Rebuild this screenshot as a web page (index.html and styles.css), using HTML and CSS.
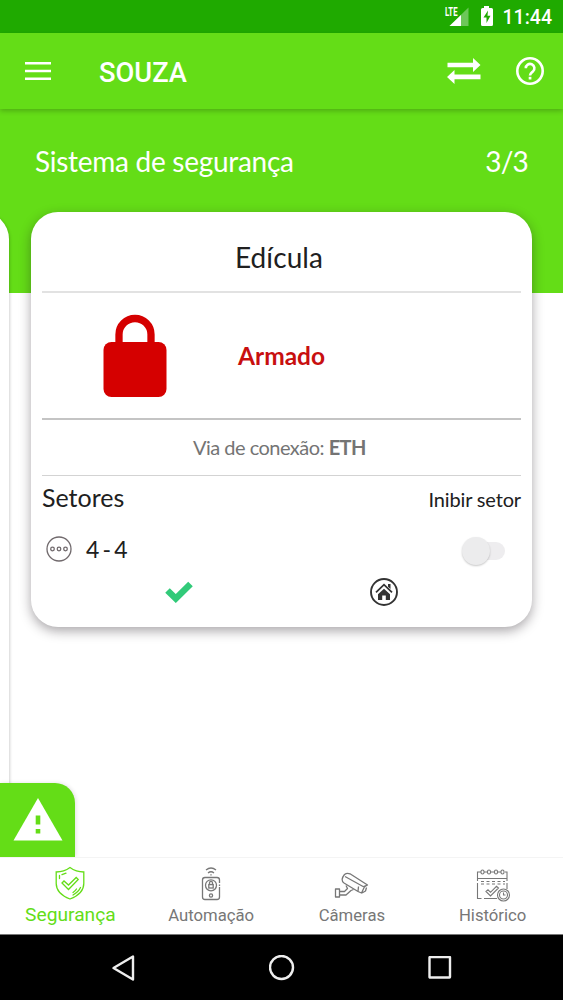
FILE: index.html
```html
<!DOCTYPE html>
<html lang="pt-BR">
<head>
<meta charset="utf-8">
<title>Sistema de segurança</title>
<link rel="stylesheet" href="styles.css">
</head>
<body>
<div class="phone">
  <div class="status">
    <svg class="signal" width="26" height="24" viewBox="0 0 26 24">
      <path d="M24.500 3.500V22H5.500z" fill="#fff" opacity=".35"/>
      <path d="M17 11V22H5.500z" fill="#fff"/>
      <path d="M0 0h14v10l-3 2.500H0z" fill="#1faa00"/>
      <text class="lte" x="1" y="11.500" textLength="12.500" lengthAdjust="spacingAndGlyphs">LTE</text>
    </svg>
    <svg class="battery" width="14" height="20" viewBox="0 0 14 20">
      <path d="M4 0h5v2h2.500Q13 2 13 3.500v15q0 1.500-1.500 1.500h-9Q1 20 1 18.500v-15Q1 2 2.500 2H4z" fill="#fff"/>
      <path d="M8 4.500L3.500 11.500H6.500V17L10.500 9.800H7.500z" fill="#1faa00"/>
    </svg>
    <span class="clock">11:44</span>
  </div>
  <header class="toolbar">
    <svg class="menu" width="26" height="18" viewBox="0 0 26 18"><path d="M0 1.300h26M0 9h26M0 16.700h26" stroke="#fff" stroke-width="2.600"/></svg>
    <h1 class="brand">SOUZA</h1>
    <svg class="swap" width="34" height="26" viewBox="0 0 34 26"><path d="M.5 4.700H26V0l7.500 7-7.500 7V9.300H.5zM33.500 21.300H7.500V26L0 19l7.500-7v4.600h26z" fill="#fff"/></svg>
    <svg class="help" width="28" height="28" viewBox="0 0 28 28"><circle cx="14" cy="14" r="12.700" fill="none" stroke="#fff" stroke-width="2.600"/><path d="M9.800 11.300a4.300 4.300 0 1 1 7.200 3.100c-1.500 1.400-3 2.100-3 4" fill="none" stroke="#fff" stroke-width="2.600"/><path d="M12.700 19.800h2.700v2.700h-2.700z" fill="#fff"/></svg>
  </header>
  <main class="content">
    <div class="heading"><span class="heading-title">Sistema de segurança</span><span class="heading-page">3/3</span></div>
    <div class="pager">
      <div class="previous"></div>
      <section class="card">
        <h2 class="name">Edícula</h2>
        <div class="state">
          <svg class="lock" width="64" height="84" viewBox="0 0 64 84"><path d="M16 32V20.500a16 16 0 0 1 32 0V32" fill="none" stroke="#d50000" stroke-width="7.300"/><rect x=".5" y="28" width="63" height="55" rx="8" fill="#d50000"/></svg>
          <strong class="armed">Armado</strong>
        </div>
        <p class="link">Via de conexão: <b>ETH</b></p>
        <div class="sectors"><span class="sectors-title">Setores</span><span class="inhibit">Inibir setor</span></div>
        <div class="sector">
          <svg width="26" height="26" viewBox="0 0 26 26" fill="none" stroke="#716a6d" stroke-width="1.300"><circle cx="13" cy="13" r="12"/><circle cx="6.500" cy="13" r="1.800"/><circle cx="13" cy="13" r="1.800"/><circle cx="19.500" cy="13" r="1.800"/></svg>
          <span class="sector-name">4 - 4</span>
          <span class="switch"><span class="knob"></span></span>
        </div>
        <div class="flags">
          <svg width="28" height="22" viewBox="0 0 28 22"><path d="M2.500 9.500L10.800 17.500L25.500 3" fill="none" stroke="#31ca79" stroke-width="6.500" stroke-linejoin="miter"/></svg>
          <svg width="28" height="28" viewBox="0 0 28 28"><circle cx="14" cy="14" r="13" fill="none" stroke="#333" stroke-width="1.900"/><path d="M6 14.300l8-7.600 8 7.600" fill="none" stroke="#333" stroke-width="1.800"/><path d="M18 6h2.500v5L18 8.800zM14 10.800l6 5.500V22h-4.200v-4.500h-3.600V22H8v-5.700z" fill="#333"/></svg>
        </div>
      </section>
    </div>
    <div class="alert"><svg width="50" height="43" viewBox="0 0 50 43"><path d="M25 0l24.500 42.500H.5z" fill="#fff"/><path d="M22.700 17.500h4.600v9h-4.600zM22.700 31h4.600v4.500h-4.600z" fill="#64dd17"/></svg></div>
  </main>
  <nav class="tabs">
    <div class="tab active">
      <svg width="32" height="36" viewBox="0 0 32 36" fill="none" stroke="currentColor" stroke-width="1.300" stroke-linecap="round"><path d="M16 1.500C12 4.500 7 6 2.200 6V17.500c0 8 6 12.500 13.800 15.500C23.800 30 29.800 25.500 29.800 17.500V6C25 6 20 4.500 16 1.500z"/><path d="M5.500 12.500V9.500M8 8.700l4-1.500M26.500 21.500c-1.500 3.500-4 5.500-7.500 7.500M22.500 23c-1 1.500-2 2.500-3.500 3.500"/><path d="M8 17l2-2 4.500 4 7.700-7.500 2 2-9.700 10z"/></svg>
      <span>Segurança</span>
    </div>
    <div class="tab">
      <svg width="32" height="36" viewBox="0 0 32 36" fill="none" stroke="currentColor" stroke-width="1.300"><path d="M11 4q5-4 10 0M13 7q3-2.500 6 0M16 8.200v1.200M24.500 17v-3q0-2.500-2.500-2.500H10q-2.500 0-2.500 2.500v17q0 2.500 2.500 2.500h12q2.500 0 2.500-2.500V21M24.500 20v-1.500"/><circle cx="16" cy="19.300" r="5.500"/><rect x="13.800" y="18.600" width="4.400" height="3.400"/><path d="M14.500 18v-1.200a1.500 1.500 0 0 1 3 0V18"/><circle cx="16" cy="29.500" r="1.600"/></svg>
      <span>Automação</span>
    </div>
    <div class="tab">
      <svg class="camera" width="36" height="36" viewBox="0 0 36 36" fill="none" stroke="currentColor" stroke-width="1.300" stroke-linejoin="round"><path d="M10.500 6.500Q13 4.500 16 5.800L33.500 17l-3 1.700-3 6.300-3.500-1.500-14-8.500Q6 12 10.500 6.500zM11 8.500l18.500 10.200M29.500 18.700l4-1.700M28 25l3.500-2 1-3.500M24 23.500l.5-5"/><path d="M12 17.500l1.500 3-3 3H5.500V27h6.500l5-4.500 2.500-1M1.500 21h4v8h-4z"/></svg>
      <span>Câmeras</span>
    </div>
    <div class="tab">
      <svg class="calendar" width="36" height="36" viewBox="0 0 36 36" fill="none" stroke="currentColor" stroke-width="1.100"><path d="M6 4H2.500v9M32 13V4h-2M9 4h3M15 4h4M22 4h4M2.500 15v15.500h4M9 30.500h13M32 15v6M2.500 10.500h29.500"/><g stroke-dasharray="3 2.500"><path d="M6 13.500h24M6 16h24"/></g><rect x="6" y="2" width="3" height="4" rx="1.500"/><rect x="12.500" y="2" width="3" height="4" rx="1.500"/><rect x="19.500" y="2" width="3" height="4" rx="1.500"/><rect x="26" y="2" width="3" height="4" rx="1.500"/><path d="M11 23.500l2-1.700 2.500 2.500 6-6 2 1.700-8 8z"/><circle cx="28.500" cy="27" r="6"/><circle cx="28.500" cy="27" r="4"/><path d="M28.500 24.500V27h2"/></svg>
      <span>Histórico</span>
    </div>
  </nav>
  <footer class="system">
    <svg width="24" height="28" viewBox="0 0 24 28"><path d="M22 2.500v23L2.500 14z"/></svg>
    <svg width="26" height="26" viewBox="0 0 26 26"><circle cx="12.500" cy="12.500" r="11.500"/></svg>
    <svg width="24" height="24" viewBox="0 0 24 24"><rect x="1.500" y="1" width="20.500" height="20.500" rx=".5"/></svg>
  </footer>
</div>
</body>
</html>
```
FILE: styles.css
```css
* { box-sizing: border-box; }
body { margin: 0; font-family: Lato, sans-serif; color: #202020; background: #fff; }
svg { display: block; flex: none; }
.phone { width: 563px; height: 1000px; display: flex; flex-direction: column; overflow: hidden; }

.status { flex: none; height: 33px; background: #1faa00; display: flex; align-items: center; padding-right: 11px; justify-content: flex-end; font-family: Roboto, sans-serif; color: #fff; }
.signal { margin: 0 10px 2px 0; }
.lte { font: 700 13px Roboto, sans-serif; fill: #fff; }
.battery { margin: 0 9px 1px 0; }
.clock { font-size: 19.5px; font-weight: 500; line-height: 33px; padding-top: 1px; }

.toolbar { flex: none; height: 76px; background: #64dd17; display: flex; align-items: center; padding: 0 19px 0 25px; position: relative; z-index: 2; box-shadow: 0 2px 5px rgba(0, 0, 0, .22); }
.brand { margin: 3px auto 0 48px; color: #fff; font: 500 27.3px/36px Roboto, sans-serif; }
.swap { margin-right: 35px; }

.content { flex: none; height: 748px; position: relative; background: linear-gradient(#64dd17 184px, #fff 184px); }
.heading { height: 103px; display: flex; justify-content: space-between; padding: 34px 35px 0 35px; color: #fff; font-size: 28px; line-height: 36px; letter-spacing: -.28px; }
.heading-page { letter-spacing: -.8px; }
.pager { display: flex; align-items: flex-start; }
.previous { flex: none; width: 60px; height: 640px; margin: 0 22px 0 -51px; background: #fff; border-radius: 27px; box-shadow: 1px 1px 3px rgba(0, 0, 0, .18); }
.card { flex: none; width: 501px; height: 415px; padding: 0 11px; background: #fff; border-radius: 27px; box-shadow: 0 4px 12px rgba(30, 20, 30, .38); }
.name { margin: 0; height: 81px; border-bottom: 2px solid #e2e2e2; padding: 10px 5px 0 0; font-size: 28px; font-weight: 400; line-height: 71px; text-align: center; letter-spacing: .1px; }
.state { height: 127px; border-bottom: 2px solid #c4c4c4; display: flex; align-items: center; padding-left: 61px; }
.lock { margin-top: 1px; }
.armed { margin-left: 71px; font-size: 24.5px; color: #c80f0f; }
.link { margin: 0; height: 56px; border-bottom: 1px solid #d3d3d3; padding-right: 4px; font-size: 20px; line-height: 54px; text-align: center; color: #747474; letter-spacing: -.52px; }
.sectors { height: 56px; display: flex; justify-content: space-between; align-items: baseline; padding-top: 4px; line-height: 34px; }
.sectors-title { font-size: 25px; }
.inhibit { font-size: 20px; letter-spacing: -.15px; }
.sector { height: 34px; display: flex; align-items: center; padding: 0 16px 0 4px; }
.sector-name { margin: 0 auto 0 14px; font-size: 23px; word-spacing: -2px; letter-spacing: -.35px; }
.switch { width: 43px; height: 30px; margin-top: 3px; display: flex; align-items: center; position: relative; }
.switch::before { content: ""; position: absolute; left: 10px; right: 0; top: 6px; height: 18px; border-radius: 9px; background: #eeedef; }
.knob { position: relative; width: 28px; height: 28px; border-radius: 50%; background: #ececed; box-shadow: 0 1px 2px rgba(0, 0, 0, .22); }
.flags { height: 52px; display: grid; grid-template-columns: 274px 136px; justify-items: center; align-items: center; }
.alert { position: absolute; left: 0; bottom: 0; width: 75px; height: 74px; padding: 15px 0 0 13px; border-radius: 0 20px 0 0; background: #64dd17; box-shadow: 1px 0 4px rgba(0, 0, 0, .12); }

.tabs { flex: none; height: 78px; display: grid; grid-template-columns: repeat(4, 1fr); background: #fff; border-top: 1px solid #f4f4f4; border-bottom: 1px solid #777; position: relative; }
.tab { display: flex; flex-direction: column; align-items: center; padding-top: 8px; color: #777; font: 16.7px/28px Roboto, sans-serif; }
.camera, .calendar { margin: 2px 0 -2px; }
.active { color: #64dd17; font-size: 19.2px; line-height: 26px; }
.system { flex: 1; display: flex; align-items: center; justify-content: space-between; padding: 0 111px; background: #000; }
.system svg { fill: none; stroke: #eee; stroke-width: 2.4; stroke-linejoin: round; }
```
